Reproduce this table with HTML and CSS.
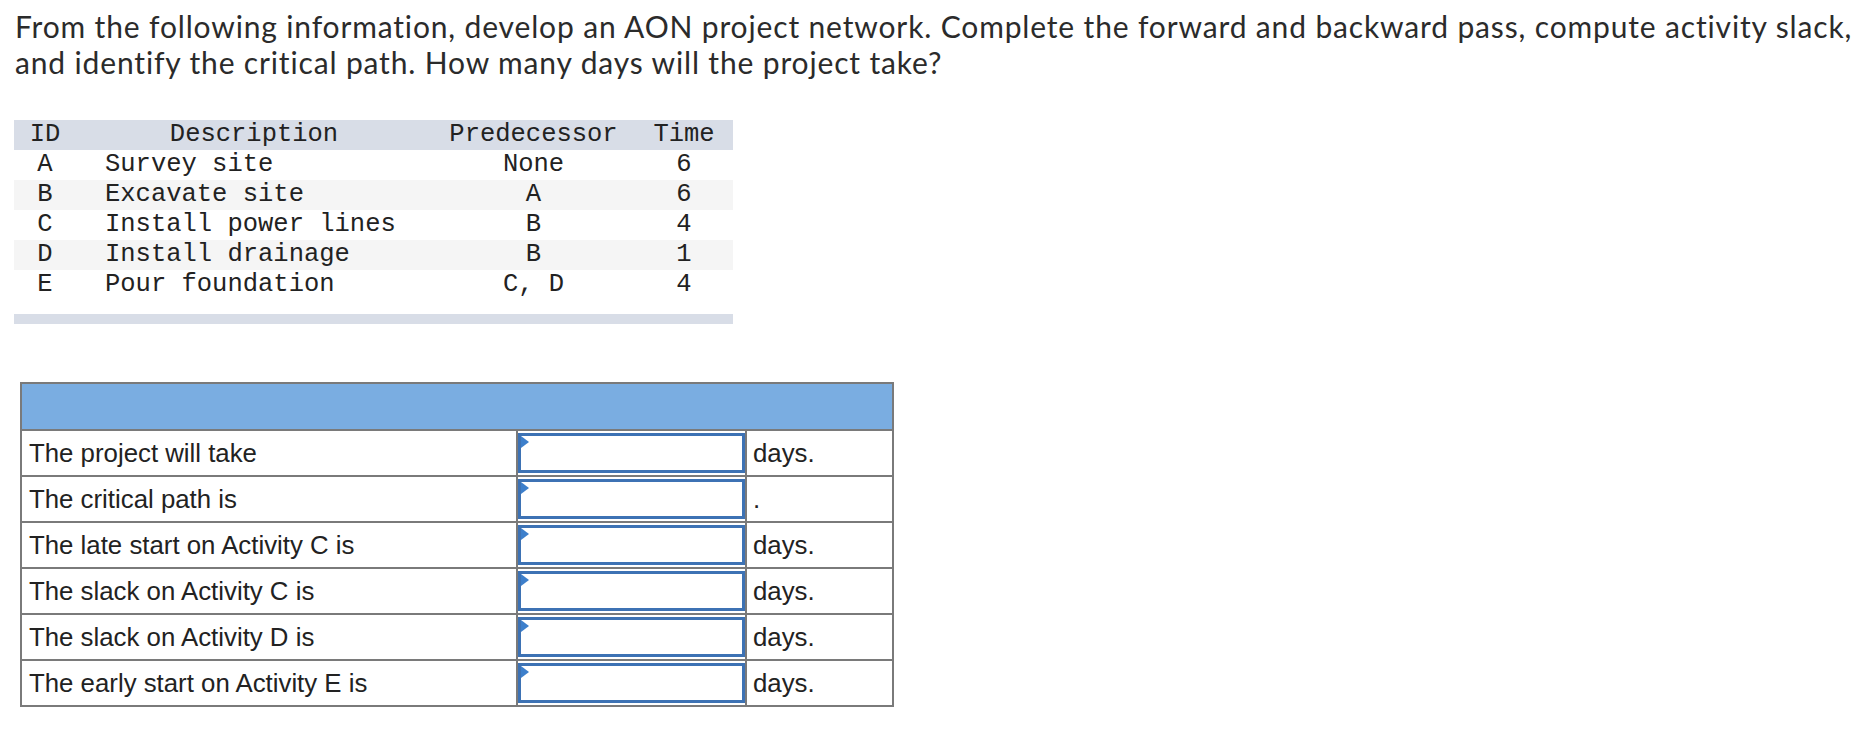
FILE: index.html
```html
<!DOCTYPE html>
<html>
<head>
<meta charset="utf-8">
<link rel="stylesheet" href="styles.css">
</head>
<body>
<p class="prompt">From the following information, develop an AON project network. Complete the forward and backward pass, compute activity slack,<br>and identify the critical path. How many days will the project take?</p>

<table class="data">
  <colgroup><col class="c-id"><col class="c-desc"><col class="c-pred"><col class="c-time"></colgroup>
  <thead>
    <tr><th>ID</th><th>Description</th><th>Predecessor</th><th>Time</th></tr>
  </thead>
  <tbody>
    <tr><td class="ctr">A</td><td class="desc">Survey site</td><td class="ctr">None</td><td class="ctr">6</td></tr>
    <tr class="alt"><td class="ctr">B</td><td class="desc">Excavate site</td><td class="ctr">A</td><td class="ctr">6</td></tr>
    <tr><td class="ctr">C</td><td class="desc">Install power lines</td><td class="ctr">B</td><td class="ctr">4</td></tr>
    <tr class="alt"><td class="ctr">D</td><td class="desc">Install drainage</td><td class="ctr">B</td><td class="ctr">1</td></tr>
    <tr><td class="ctr">E</td><td class="desc">Pour foundation</td><td class="ctr">C, D</td><td class="ctr">4</td></tr>
    <tr class="spacer"><td colspan="4"></td></tr>
    <tr class="foot"><td colspan="4"></td></tr>
  </tbody>
</table>

<table class="answers">
  <colgroup><col class="a-label"><col class="a-input"><col class="a-unit"></colgroup>
  <tr class="head"><td colspan="3"></td></tr>
  <tr><td class="label">The project will take</td><td class="box"><div class="field"><span class="tri"></span></div></td><td class="unit">days.</td></tr>
  <tr><td class="label">The critical path is</td><td class="box"><div class="field"><span class="tri"></span></div></td><td class="unit">.</td></tr>
  <tr><td class="label">The late start on Activity C is</td><td class="box"><div class="field"><span class="tri"></span></div></td><td class="unit">days.</td></tr>
  <tr><td class="label">The slack on Activity C is</td><td class="box"><div class="field"><span class="tri"></span></div></td><td class="unit">days.</td></tr>
  <tr><td class="label">The slack on Activity D is</td><td class="box"><div class="field"><span class="tri"></span></div></td><td class="unit">days.</td></tr>
  <tr><td class="label">The early start on Activity E is</td><td class="box"><div class="field"><span class="tri"></span></div></td><td class="unit">days.</td></tr>
</table>
</body>
</html>
```

FILE: styles.css
```css
html, body {
  margin: 0;
  padding: 0;
  background: #ffffff;
}

body {
  padding: 0 0 0 15px;
}

.prompt {
  margin: 0;
  padding-top: 8px;
  font-family: Lato, "Open Sans", sans-serif;
  font-size: 30px;
  letter-spacing: 0.85px;
  line-height: 36px;
  color: #2b2b2b;
}

.data {
  margin: 40px 0 0 -1px;
  border-collapse: collapse;
  border-spacing: 0;
  table-layout: fixed;
  width: 719px;
  font-family: "Liberation Mono", "Courier New", monospace;
  font-size: 25.5px;
  color: #222222;
}

.c-id { width: 62px; }
.c-desc { width: 356px; }
.c-pred { width: 203px; }
.c-time { width: 98px; }

.data th,
.data td {
  padding: 0;
  height: 30px;
  line-height: 30px;
  font-weight: normal;
  white-space: nowrap;
}

.data thead tr {
  background: #d8dde7;
}

.data th {
  text-align: center;
}

.data .ctr {
  text-align: center;
}

.data .desc {
  text-align: left;
  padding-left: 29px;
}

.data .alt {
  background: #f5f5f5;
}

.data .spacer td {
  height: 14px;
  line-height: 14px;
}

.data .foot td {
  height: 10px;
  line-height: 10px;
  background: #d8dde7;
}

.answers {
  margin: 58px 0 0 5px;
  border-collapse: collapse;
  border-spacing: 0;
  table-layout: fixed;
  width: 872px;
  border: 2px solid #7a7a7a;
  font-family: "Liberation Sans", Arial, sans-serif;
  font-size: 25.8px;
  color: #222222;
}

.a-label { width: 496px; }
.a-input { width: 229px; }
.a-unit { width: 147px; }

.answers td {
  border: 2px solid #7a7a7a;
  height: 42px;
  padding: 0;
  vertical-align: middle;
  white-space: nowrap;
}

.answers .head td {
  height: 45px;
  background: #7aade1;
}

.answers .label {
  padding-left: 7px;
}

.answers .unit {
  padding-left: 6px;
}

.answers .box {
  padding: 1px 0;
}

.field {
  position: relative;
  height: 34px;
  border: 3px solid #3d72b4;
  background: #ffffff;
}

.tri {
  position: absolute;
  left: 0;
  top: 0;
  width: 0;
  height: 0;
  border-top: 6px solid transparent;
  border-bottom: 6px solid transparent;
  border-left: 8px solid #3d7fcb;
}
```
